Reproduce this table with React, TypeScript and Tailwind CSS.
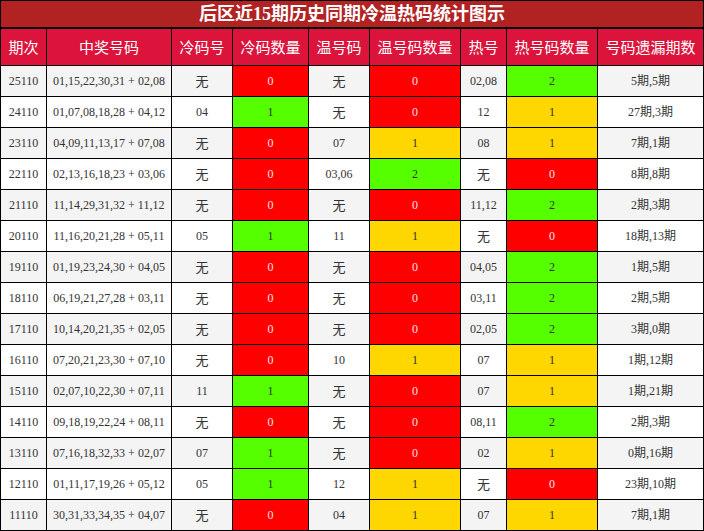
import React from "react";

type Row = [string, string, string, number, string, number, string, number, string];

const rows: Row[] = [
  ["25110", "01,15,22,30,31 + 02,08", "无", 0, "无", 0, "02,08", 2, "5期,5期"],
  ["24110", "01,07,08,18,28 + 04,12", "04", 1, "无", 0, "12", 1, "27期,3期"],
  ["23110", "04,09,11,13,17 + 07,08", "无", 0, "07", 1, "08", 1, "7期,1期"],
  ["22110", "02,13,16,18,23 + 03,06", "无", 0, "03,06", 2, "无", 0, "8期,8期"],
  ["21110", "11,14,29,31,32 + 11,12", "无", 0, "无", 0, "11,12", 2, "2期,3期"],
  ["20110", "11,16,20,21,28 + 05,11", "05", 1, "11", 1, "无", 0, "18期,13期"],
  ["19110", "01,19,23,24,30 + 04,05", "无", 0, "无", 0, "04,05", 2, "1期,5期"],
  ["18110", "06,19,21,27,28 + 03,11", "无", 0, "无", 0, "03,11", 2, "2期,5期"],
  ["17110", "10,14,20,21,35 + 02,05", "无", 0, "无", 0, "02,05", 2, "3期,0期"],
  ["16110", "07,20,21,23,30 + 07,10", "无", 0, "10", 1, "07", 1, "1期,12期"],
  ["15110", "02,07,10,22,30 + 07,11", "11", 1, "无", 0, "07", 1, "1期,21期"],
  ["14110", "09,18,19,22,24 + 08,11", "无", 0, "无", 0, "08,11", 2, "2期,3期"],
  ["13110", "07,16,18,32,33 + 02,07", "07", 1, "无", 0, "02", 1, "0期,16期"],
  ["12110", "01,11,17,19,26 + 05,12", "05", 1, "12", 1, "无", 0, "23期,10期"],
  ["11110", "30,31,33,34,35 + 04,07", "无", 0, "04", 1, "07", 1, "7期,1期"],
];

const headers = ["期次", "中奖号码", "冷码号", "冷码数量", "温号码", "温号码数量", "热号", "热号码数量", "号码遗漏期数"];

const serif = "font-['Liberation_Serif','Noto_Sans_CJK_SC',serif]";

function countClass(n: number, cold: boolean) {
  if (n === 0) return "bg-[#ff0000] text-[#ffe2e2]";
  if (n === 1 && cold) return "bg-[#55ff00] text-[#333]";
  if (n === 1) return "bg-[#ffd700] text-[#333]";
  return "bg-[#55ff00] text-[#333]";
}

function Plain({ text, bg }: { text: string; bg: string }) {
  const isCjk = text === "无";
  return (
    <div
      className={`${bg} flex items-center justify-center h-[30px] text-[#333] ${
        isCjk ? "text-[13px] font-['Noto_Sans_CJK_SC',sans-serif]" : `text-[12px] ${serif}`
      }`}
    >
      {text}
    </div>
  );
}

export default function App() {
  return (
    <div className="w-[704px] bg-black p-px flex flex-col gap-[2px]">
      <div className="h-[26px] bg-[#b22222] flex items-center justify-center text-white text-[18px] font-bold font-['Liberation_Serif','Noto_Sans_CJK_SC',serif] leading-none">
        后区近15期历史同期冷温热码统计图示
      </div>
      <div className="grid grid-cols-[45px_124px_60px_75px_60px_90px_45px_90px_105px] gap-px">
        {headers.map((h) => (
          <div
            key={h}
            className="h-[36px] bg-[#dc143c] flex items-center justify-center text-white text-[15px] font-['Noto_Sans_CJK_SC',sans-serif]"
          >
            {h}
          </div>
        ))}
        {rows.map((r, i) => {
          const bg = i % 2 === 0 ? "bg-[#f4f4f4]" : "bg-white";
          return (
            <React.Fragment key={r[0]}>
              <Plain text={r[0]} bg={bg} />
              <Plain text={r[1]} bg={bg} />
              <Plain text={r[2]} bg={bg} />
              <div className={`${countClass(r[3], true)} h-[30px] flex items-center justify-center text-[12px] ${serif}`}>{r[3]}</div>
              <Plain text={r[4]} bg={bg} />
              <div className={`${countClass(r[5], false)} h-[30px] flex items-center justify-center text-[12px] ${serif}`}>{r[5]}</div>
              <Plain text={r[6]} bg={bg} />
              <div className={`${countClass(r[7], false)} h-[30px] flex items-center justify-center text-[12px] ${serif}`}>{r[7]}</div>
              <div className={`${bg} h-[30px] flex items-center justify-center text-[12px] text-[#333] ${serif}`}>{r[8]}</div>
            </React.Fragment>
          );
        })}
      </div>
    </div>
  );
}
